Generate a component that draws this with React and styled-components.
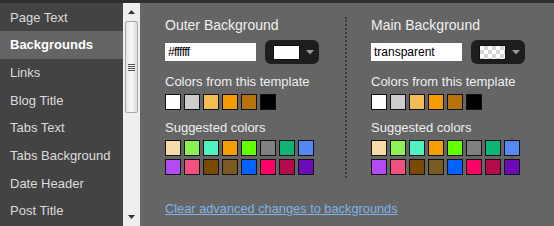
import React from "react";
import styled, { createGlobalStyle } from "styled-components";

const GlobalStyle = createGlobalStyle`
  html, body {
    margin: 0;
    padding: 0;
    background: #656565;
  }
  body {
    font-family: "Liberation Sans", Arial, sans-serif;
  }
`;

const Frame = styled.div`
  width: 554px;
  height: 226px;
  display: flex;
  flex-direction: column;
  overflow: hidden;
`;

const TopStrip = styled.div`
  height: 3px;
  background: #2f2f2f;
  flex: none;
`;

const Body = styled.div`
  flex: 1;
  display: flex;
  min-height: 0;
`;

const Sidebar = styled.div`
  width: 123px;
  background: #434343;
  display: flex;
  flex-direction: column;
  padding-top: 0.5px;
`;

const NavItem = styled.div`
  height: 27.7px;
  line-height: 27.7px;
  padding-left: 10px;
  font-size: 13px;
  color: ${(p) => (p.active ? "#ffffff" : "#dcdcdc")};
  font-weight: ${(p) => (p.active ? "bold" : "normal")};
  background: ${(p) => (p.active ? "#656565" : "transparent")};
  white-space: nowrap;
  flex: none;
`;

const Scrollbar = styled.div`
  width: 17px;
  background: #efefef;
  display: flex;
  flex-direction: column;
  align-items: center;
`;

const ScrollArrow = styled.div`
  height: 18px;
  display: flex;
  align-items: center;
  justify-content: center;
  flex: none;
`;

const ScrollTrack = styled.div`
  flex: 1;
  width: 100%;
  padding: 0 2px;
  box-sizing: border-box;
`;

const Thumb = styled.div`
  height: 92px;
  border: 1px solid #a8a8a8;
  border-radius: 2px;
  background: linear-gradient(90deg, #e4e4e4, #f8f8f8 50%, #dcdcdc);
  display: flex;
  align-items: center;
  justify-content: center;
  box-sizing: border-box;
`;

const Grip = styled.div`
  width: 7px;
  height: 7px;
  background: repeating-linear-gradient(180deg, #555 0 1px, transparent 1px 2px);
`;

const Main = styled.div`
  flex: 1;
  background: #656565;
  padding: 13px 0 0 25px;
  display: flex;
  flex-direction: column;
`;

const Columns = styled.div`
  display: flex;
`;

const Column = styled.div`
  width: 180px;
  display: flex;
  flex-direction: column;
`;

const Divider = styled.div`
  width: 0;
  border-left: 2px dotted #3a3a3a;
  margin: 1px 24px 0 0;
  height: 161px;
`;

const Heading = styled.div`
  font-size: 14px;
  color: #f0f0f0;
  height: 18px;
  line-height: 18px;
`;

const InputRow = styled.div`
  display: flex;
  align-items: center;
  gap: 9px;
  margin-top: 6px;
`;

const TextInput = styled.div`
  width: 91px;
  height: 18px;
  background: #ffffff;
  color: #000;
  font-size: 12px;
  line-height: 18px;
  padding-left: 3px;
  box-sizing: border-box;
  letter-spacing: ${(p) => (p.tight ? "-0.6px" : "0")};
`;

const Picker = styled.div`
  width: 54px;
  height: 24px;
  background: #1e1e1e;
  border-radius: 6px;
  display: flex;
  align-items: center;
  padding-left: 8px;
  gap: 6px;
  box-sizing: border-box;
`;

const PickerSwatch = styled.div`
  width: 27px;
  height: 15px;
  box-sizing: border-box;
  border: 1px solid #111;
  background: ${(p) =>
    p.transparent
      ? "repeating-conic-gradient(#d6d6d6 0 25%, #ffffff 0 50%) 0 0 / 8px 8px"
      : p.color};
`;

const Label = styled.div`
  font-size: 13px;
  color: #efefef;
  margin-top: ${(p) => p.top}px;
  height: 16px;
  line-height: 16px;
`;

const SwatchGrid = styled.div`
  display: grid;
  grid-template-columns: repeat(8, 16px);
  gap: 3px;
  margin-top: 4px;
`;

const Swatch = styled.div`
  width: 16px;
  height: 16px;
  box-sizing: border-box;
  border: 1px solid #111;
  background: ${(p) => p.color};
`;

const ClearLink = styled.a`
  margin-top: 23px;
  font-size: 12.8px;
  color: #80b3e4;
  text-decoration: underline;
  cursor: pointer;
  align-self: flex-start;
`;

const navItems = [
  "Page Text",
  "Backgrounds",
  "Links",
  "Blog Title",
  "Tabs Text",
  "Tabs Background",
  "Date Header",
  "Post Title",
];

const templateColors = ["#ffffff", "#cccccc", "#f2bd55", "#f59b00", "#b8720c", "#000000"];

const suggestedColors = [
  "#f5dba8", "#8cf252", "#4ff2c0", "#f59e00", "#66ff00", "#808080", "#0db474", "#5588f2",
  "#b24cf2", "#f2507f", "#7a4a00", "#7a5a22", "#0062ff", "#ff0066", "#b30a4c", "#6b0cb8",
];

function Arrow({ up }) {
  return (
    <svg width="7" height="4" viewBox="0 0 7 4">
      <polygon points={up ? "0,4 7,4 3.5,0" : "0,0 7,0 3.5,4"} fill="#333" />
    </svg>
  );
}

function ColorBlock({ title, value, swatch, transparent, tight }) {
  return (
    <Column>
      <Heading>{title}</Heading>
      <InputRow>
        <TextInput tight={tight}>{value}</TextInput>
        <Picker>
          <PickerSwatch color={swatch} transparent={transparent} />
          <svg width="8" height="5" viewBox="0 0 8 5">
            <polygon points="0,0 8,0 4,4.5" fill="#9a9a9a" />
          </svg>
        </Picker>
      </InputRow>
      <Label top={10}>Colors from this template</Label>
      <SwatchGrid>
        {templateColors.map((c, i) => (
          <Swatch key={i} color={c} />
        ))}
      </SwatchGrid>
      <Label top={10}>Suggested colors</Label>
      <SwatchGrid>
        {suggestedColors.map((c, i) => (
          <Swatch key={i} color={c} />
        ))}
      </SwatchGrid>
    </Column>
  );
}

export default function App() {
  return (
    <Frame>
      <GlobalStyle />
      <TopStrip />
      <Body>
        <Sidebar>
          {navItems.map((n) => (
            <NavItem key={n} active={n === "Backgrounds"}>
              {n}
            </NavItem>
          ))}
        </Sidebar>
        <Scrollbar>
          <ScrollArrow>
            <Arrow up />
          </ScrollArrow>
          <ScrollTrack>
            <Thumb>
              <Grip />
            </Thumb>
          </ScrollTrack>
          <ScrollArrow>
            <Arrow />
          </ScrollArrow>
        </Scrollbar>
        <Main>
          <Columns>
            <ColorBlock title="Outer Background" value="#ffffff" swatch="#ffffff" tight />
            <Divider />
            <ColorBlock title="Main Background" value="transparent" transparent />
          </Columns>
          <ClearLink>Clear advanced changes to backgrounds</ClearLink>
        </Main>
      </Body>
    </Frame>
  );
}
